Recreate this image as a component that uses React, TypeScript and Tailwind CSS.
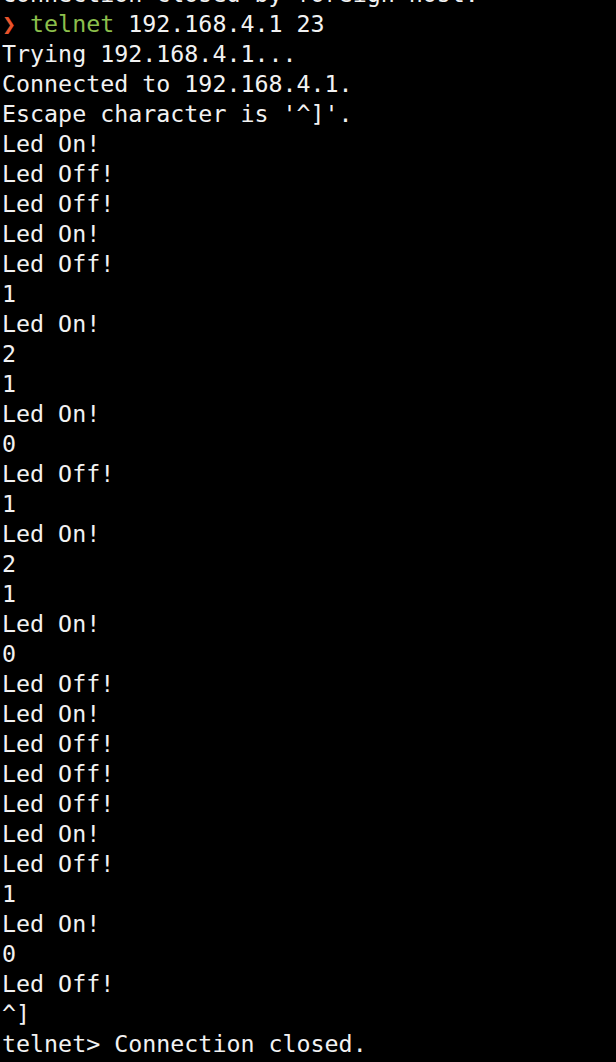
const lines = [
  'Trying 192.168.4.1...',
  'Connected to 192.168.4.1.',
  "Escape character is '^]'.",
  'Led On!',
  'Led Off!',
  'Led Off!',
  'Led On!',
  'Led Off!',
  '1',
  'Led On!',
  '2',
  '1',
  'Led On!',
  '0',
  'Led Off!',
  '1',
  'Led On!',
  '2',
  '1',
  'Led On!',
  '0',
  'Led Off!',
  'Led On!',
  'Led Off!',
  'Led Off!',
  'Led Off!',
  'Led On!',
  'Led Off!',
  '1',
  'Led On!',
  '0',
  'Led Off!',
  '^]',
  'telnet> Connection closed.',
];

const App = () => {
  return (
    <div className="h-[1062px] w-[616px] overflow-hidden bg-black">
      <pre className="-mt-[21px] pl-[2px] font-['DejaVu_Sans_Mono',monospace] text-[23.3px] leading-[30px] text-[#f2f2f2]">
        <div>Connection closed by foreign host.</div>
        <div>
          <span className="text-[#e9542c]">❯</span>{' '}
          <span className="text-[#8cbf4c]">telnet</span> 192.168.4.1 23
        </div>
        {lines.map((line, index) => (
          <div key={index}>{line}</div>
        ))}
      </pre>
    </div>
  );
};

export default App;
